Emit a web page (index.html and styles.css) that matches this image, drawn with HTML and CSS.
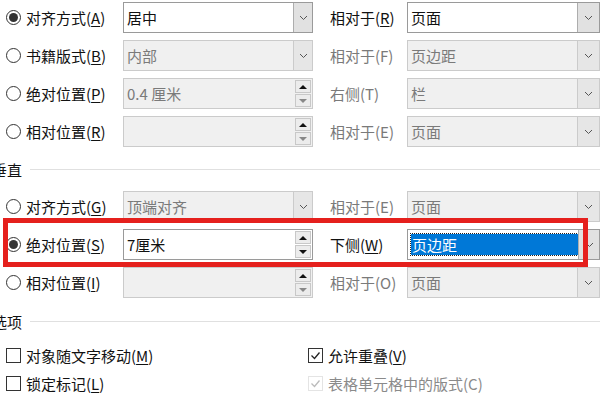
FILE: index.html
```html
<!DOCTYPE html>
<html lang="zh-CN">
<head>
    <meta charset="UTF-8">
    <meta name="viewport" content="width=device-width, initial-scale=1.0">
    <title>布局</title>
    <link rel="stylesheet" href="styles.css">
</head>
<body>
    <div id="dialog">
        <div class="group first">
            <div class="row">
                <label class="opt"><span class="radio on"></span><span>对齐方式(<u>A</u>)</span></label>
                <div class="box combo"><span class="val">居中</span><span class="drop"><svg width="9" height="6" viewBox="0 0 9 6"><path d="M1 1l3.5 3.5L8 1" fill="none" stroke="#555" stroke-width="1"/></svg></span></div>
                <span class="lab">相对于(<u>R</u>)</span>
                <div class="box combo wide"><span class="val">页面</span><span class="drop"><svg width="9" height="6" viewBox="0 0 9 6"><path d="M1 1l3.5 3.5L8 1" fill="none" stroke="#555" stroke-width="1"/></svg></span></div>
            </div>
            <div class="row">
                <label class="opt"><span class="radio"></span><span>书籍版式(<u>B</u>)</span></label>
                <div class="box combo off"><span class="val">内部</span><span class="drop"><svg width="9" height="6" viewBox="0 0 9 6"><path d="M1 1l3.5 3.5L8 1" fill="none" stroke="#555" stroke-width="1"/></svg></span></div>
                <span class="lab off">相对于(F)</span>
                <div class="box combo wide off"><span class="val">页边距</span><span class="drop"><svg width="9" height="6" viewBox="0 0 9 6"><path d="M1 1l3.5 3.5L8 1" fill="none" stroke="#555" stroke-width="1"/></svg></span></div>
            </div>
            <div class="row">
                <label class="opt"><span class="radio"></span><span>绝对位置(<u>P</u>)</span></label>
                <div class="box spin off"><span class="val">0.4 厘米</span><span class="arrows"><span class="up"></span><span class="down"></span></span></div>
                <span class="lab off">右侧(T)</span>
                <div class="box combo wide off"><span class="val">栏</span><span class="drop"><svg width="9" height="6" viewBox="0 0 9 6"><path d="M1 1l3.5 3.5L8 1" fill="none" stroke="#555" stroke-width="1"/></svg></span></div>
            </div>
            <div class="row">
                <label class="opt"><span class="radio"></span><span>相对位置(<u>R</u>)</span></label>
                <div class="box spin off"><span class="val"></span><span class="arrows"><span class="up"></span><span class="down"></span></span></div>
                <span class="lab off">相对于(E)</span>
                <div class="box combo wide off"><span class="val">页面</span><span class="drop"><svg width="9" height="6" viewBox="0 0 9 6"><path d="M1 1l3.5 3.5L8 1" fill="none" stroke="#555" stroke-width="1"/></svg></span></div>
            </div>
        </div>

        <div class="heading"><span>垂直</span><i></i></div>

        <div class="group">
            <div class="row">
                <label class="opt"><span class="radio"></span><span>对齐方式(<u>G</u>)</span></label>
                <div class="box combo off"><span class="val">顶端对齐</span><span class="drop"><svg width="9" height="6" viewBox="0 0 9 6"><path d="M1 1l3.5 3.5L8 1" fill="none" stroke="#555" stroke-width="1"/></svg></span></div>
                <span class="lab off">相对于(E)</span>
                <div class="box combo wide off"><span class="val">页面</span><span class="drop"><svg width="9" height="6" viewBox="0 0 9 6"><path d="M1 1l3.5 3.5L8 1" fill="none" stroke="#555" stroke-width="1"/></svg></span></div>
            </div>
            <div class="row marked">
                <label class="opt"><span class="radio on"></span><span>绝对位置(<u>S</u>)</span></label>
                <div class="box spin"><span class="val">7厘米</span><span class="arrows"><span class="up"></span><span class="down"></span></span></div>
                <span class="lab">下侧(<u>W</u>)</span>
                <div class="box combo wide"><span class="val"><span class="sel">页边距</span></span><span class="drop"><svg width="9" height="6" viewBox="0 0 9 6"><path d="M1 1l3.5 3.5L8 1" fill="none" stroke="#555" stroke-width="1"/></svg></span></div>
                <div class="redbox"></div>
            </div>
            <div class="row">
                <label class="opt"><span class="radio"></span><span>相对位置(<u>I</u>)</span></label>
                <div class="box spin off"><span class="val"></span><span class="arrows"><span class="up"></span><span class="down"></span></span></div>
                <span class="lab off">相对于(O)</span>
                <div class="box combo wide off"><span class="val">页面</span><span class="drop"><svg width="9" height="6" viewBox="0 0 9 6"><path d="M1 1l3.5 3.5L8 1" fill="none" stroke="#555" stroke-width="1"/></svg></span></div>
            </div>
        </div>

        <div class="heading second"><span>选项</span><i></i></div>

        <div class="checks">
            <label class="opt"><span class="check"></span><span>对象随文字移动(<u>M</u>)</span></label>
            <label class="opt"><span class="check on"><svg width="13" height="13" viewBox="0 0 13 13"><path d="M2.5 6.5l3 3 5-6" fill="none" stroke="#222" stroke-width="1.3"/></svg></span><span>允许重叠(<u>V</u>)</span></label>
            <label class="opt"><span class="check"></span><span>锁定标记(<u>L</u>)</span></label>
            <label class="opt off"><span class="check on off"><svg width="13" height="13" viewBox="0 0 13 13"><path d="M2.5 6.5l3 3 5-6" fill="none" stroke="#bbb" stroke-width="1.3"/></svg></span><span>表格单元格中的版式(C)</span></label>
        </div>
    </div>
</body>
</html>
```

FILE: styles.css
```css
body{
    margin: 0;
    background-color: white;
    font-family: "Noto Sans CJK SC", "Noto Sans", sans-serif;
    font-size: 15px;
    color: #111;
    overflow: hidden;
}

#dialog{
    width: 600px;
    height: 400px;
}

.group{
    display: flex;
    flex-direction: column;
    gap: 7px;
}

.group.first{
    padding-top: 2px;
}

.row{
    display: grid;
    grid-template-columns: 123px 190px 94px 193px;
    align-items: center;
    height: 31px;
}

.row.marked{
    position: relative;
}

.opt{
    display: flex;
    align-items: center;
    gap: 5px;
    white-space: nowrap;
}

.opt.off{
    color: #8a8a8a;
}

u{
    text-decoration-thickness: 1px;
    text-underline-offset: 2px;
}

.radio{
    width: 15px;
    height: 15px;
    margin-left: 6px;
    border: 1px solid #333;
    border-radius: 50%;
    box-sizing: border-box;
    display: flex;
    align-items: center;
    justify-content: center;
    flex-shrink: 0;
}

.radio.on::after{
    content: "";
    width: 9px;
    height: 9px;
    border-radius: 50%;
    background-color: #333;
}

.lab{
    padding-left: 17px;
    white-space: nowrap;
}

.lab.off{
    color: #7a7a7a;
}

.box{
    height: 31px;
    box-sizing: border-box;
    border: 1px solid #9a9a9a;
    background-color: white;
    display: flex;
}

.box.off{
    border-color: #cbcbcb;
    background-color: #f0f0f0;
    color: #7a7a7a;
}

.val{
    flex: 1;
    display: flex;
    align-items: center;
    padding-left: 3px;
    white-space: nowrap;
}

.sel{
    background-color: #0078d7;
    color: white;
    outline: 1px dotted #222;
    width: 166px;
    height: 21px;
    display: flex;
    align-items: center;
    padding-left: 1px;
}

.drop{
    width: 18px;
    background-color: #e1e1e1;
    border-left: 1px solid #adadad;
    display: flex;
    align-items: center;
    justify-content: center;
}

.wide .drop{
    width: 21px;
}

.off .drop{
    border-left-color: #cbcbcb;
    background-color: #e6e6e6;
}

.arrows{
    width: 16px;
    display: flex;
    flex-direction: column;
    padding: 1px 1px 1px 0;
    gap: 1px;
}

.up,
.down{
    flex: 1;
    background-color: #ececec;
    border: 1px solid #c8c8c8;
    display: flex;
    align-items: center;
    justify-content: center;
}

.up::after{
    content: "";
    border-left: 4px solid transparent;
    border-right: 4px solid transparent;
    border-bottom: 4px solid #111;
}

.down::after{
    content: "";
    border-left: 4px solid transparent;
    border-right: 4px solid transparent;
    border-top: 4px solid #111;
}

.off .down::after{
    border-top-color: #888;
}

.redbox{
    position: absolute;
    left: 3px;
    top: -11px;
    width: 585px;
    height: 49px;
    box-sizing: border-box;
    border: 5px solid #e5201d;
}

.heading{
    display: flex;
    align-items: center;
    height: 44px;
    gap: 8px;
}

.heading span{
    margin-left: -8px;
    white-space: nowrap;
}

.heading i{
    flex: 1;
    border-top: 1px solid #e0e0e0;
}

.heading.second{
    height: 47px;
}

.checks{
    display: grid;
    grid-template-columns: 302px 1fr;
    row-gap: 7px;
}

.check{
    width: 15px;
    height: 15px;
    margin-left: 6px;
    border: 1px solid #333;
    box-sizing: border-box;
    display: flex;
    align-items: center;
    justify-content: center;
    flex-shrink: 0;
}

.check.off{
    border-color: #e4e4e4;
}
```
